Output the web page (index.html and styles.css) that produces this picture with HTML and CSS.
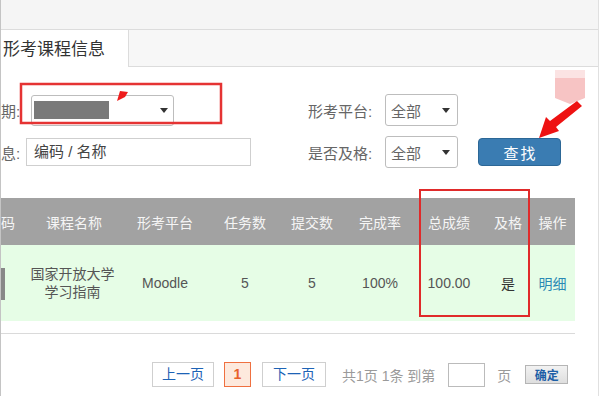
FILE: index.html
```html
<!DOCTYPE html>
<html lang="zh-CN">
<head>
    <meta charset="UTF-8">
    <title>形考课程信息</title>
    <link rel="stylesheet" href="styles.css">
</head>
<body>
    <div class="frame">
        <div class="topbar"></div>
        <div class="tabs">
            <div class="tab"><span class="tab-text">形考课程信息</span></div>
            <div class="tab-rest"></div>
        </div>

        <form class="search">
            <div class="row">
                <div class="left">
                    <span class="short-label">期:</span>
                    <div class="select select-term">
                        <span class="masked"></span>
                        <span class="caret"></span>
                    </div>
                </div>
                <span class="label">形考平台:</span>
                <div class="select select-small"><span>全部</span><span class="caret"></span></div>
            </div>
            <div class="row">
                <div class="left">
                    <span class="short-label">息:</span>
                    <div class="text-input">编码 / 名称</div>
                </div>
                <span class="label">是否及格:</span>
                <div class="select select-small"><span>全部</span><span class="caret"></span></div>
                <button type="button" class="find-btn">查找</button>
            </div>
        </form>

        <div class="grid">
            <div class="grid-head">
                <div class="cell first">码</div>
                <div class="cell">课程名称</div>
                <div class="cell">形考平台</div>
                <div class="cell">任务数</div>
                <div class="cell">提交数</div>
                <div class="cell">完成率</div>
                <div class="cell">总成绩</div>
                <div class="cell">及格</div>
                <div class="cell last">操作</div>
            </div>
            <div class="grid-row">
                <div class="cell first"><span class="stub"></span></div>
                <div class="cell name">国家开放大学<br>学习指南</div>
                <div class="cell">Moodle</div>
                <div class="cell">5</div>
                <div class="cell">5</div>
                <div class="cell">100%</div>
                <div class="cell">100.00</div>
                <div class="cell dark">是</div>
                <div class="cell last"><a class="link">明细</a></div>
            </div>
        </div>

        <div class="pager">
            <a class="page-btn prev">上一页</a>
            <a class="page-btn current">1</a>
            <a class="page-btn next">下一页</a>
            <span class="pager-info">共1页 1条 到第</span>
            <span class="page-input"></span>
            <span class="pager-info unit">页</span>
            <button type="button" class="go-btn">确定</button>
        </div>

        <!-- annotation marks drawn on top of the screenshot -->
        <svg class="marks" width="601" height="396" viewBox="0 0 601 396">
            <rect x="21" y="84" width="200" height="39" fill="none" stroke="#e53333" stroke-width="2.5"/>
            <polygon points="120,91 128,92 125,97 117,101" fill="#ee1c1c"/>
            <rect x="555" y="70" width="30" height="22" fill="#fbe3e3"/>
            <polygon points="555,78 585,78 585,98 570,104 555,98" fill="#f7c4c4"/>
            <polygon points="577,101 582,106 556,127 559,131 539,138 546,117 550,121" fill="#ee1212"/>
            <rect x="420" y="190" width="109" height="126" fill="none" stroke="#e02a2a" stroke-width="2"/>
        </svg>
    </div>
</body>
</html>
```

FILE: styles.css
```css
body {
    margin: 0;
    background: #fff;
    font-family: 'Liberation Sans', 'Noto Sans CJK SC', sans-serif;
    color: #555;
}

.frame {
    position: relative;
    width: 597px;
    height: 396px;
    border-left: 1px solid #c4c4c4;
    border-right: 1px solid #e0e0e0;
    overflow: hidden;
}

.topbar {
    height: 29px;
    background: #f5f5f5;
    border-bottom: 1px solid #dcdcdc;
}

.tabs {
    display: flex;
    height: 37px;
}

.tab {
    width: 128px;
    box-sizing: border-box;
    background: #fff;
    border-right: 1px solid #dcdcdc;
    display: flex;
    align-items: center;
    padding-left: 2px;
}

.tab-text {
    font-size: 17px;
    color: #333;
    white-space: nowrap;
    margin-bottom: 3px;
}

.tab-rest {
    flex: 1;
    background: #f7f7f7;
    border-bottom: 1px solid #dcdcdc;
}

.search {
    padding-top: 27px;
    display: flex;
    flex-direction: column;
    gap: 10px;
}

.row {
    display: flex;
    align-items: center;
    height: 32px;
}

.left {
    width: 307px;
    display: flex;
    align-items: center;
}

.short-label {
    width: 18px;
    white-space: nowrap;
    font-size: 15px;
    color: #666;
}

.select {
    position: relative;
    box-sizing: border-box;
    border: 1px solid #bdbdbd;
    border-radius: 3px;
    background: #fff;
    display: flex;
    align-items: center;
    font-size: 15px;
    color: #666;
}

.select-term {
    width: 143px;
    height: 31px;
    margin-left: 12px;
    padding-left: 2px;
}

.masked {
    width: 75px;
    height: 18px;
    background: #7a7a7a;
}

.caret {
    position: absolute;
    right: 5px;
    top: 50%;
    margin-top: -2px;
    border-left: 4px solid transparent;
    border-right: 4px solid transparent;
    border-top: 5px solid #333;
}

.select-small {
    width: 73px;
    height: 32px;
    padding-left: 5px;
}

.select-small .caret {
    right: 7px;
}

.text-input {
    box-sizing: border-box;
    width: 225px;
    height: 28px;
    margin-left: 7px;
    border: 1px solid #cfcfcf;
    padding-left: 7px;
    font-size: 15px;
    line-height: 26px;
    color: #444;
}

.label {
    width: 77px;
    font-size: 15px;
    color: #666;
}

.find-btn {
    margin-left: 20px;
    width: 83px;
    height: 28px;
    background: #3a7cb2;
    border: 1px solid #2c6796;
    border-radius: 4px;
    color: #fff;
    font-family: 'Noto Sans CJK SC', sans-serif;
    font-size: 15px;
    letter-spacing: 2px;
    padding: 0 0 0 2px;
}

.grid {
    margin-top: 30px;
    width: 575px;
    border-bottom: 1px solid #dadada;
    padding-bottom: 12px;
    margin-left: -1px;
}

.grid-head,
.grid-row {
    display: grid;
    grid-template-columns: 25px 98px 84px 76px 58px 78px 60px 58px 38px;
    align-items: center;
}

.grid-head {
    height: 47px;
    background: #a2a2a2;
    color: #f5f5f5;
    font-size: 14px;
}

.grid-row {
    height: 76px;
    background: #e6fde6;
    font-size: 14px;
    color: #555;
}

.cell {
    text-align: center;
    white-space: nowrap;
}

.grid-head .cell.first {
    text-align: left;
    padding-left: 1px;
}

.grid-row .cell.first {
    display: flex;
}

.stub {
    width: 5px;
    height: 32px;
    background: #888;
    margin-top: 2px;
}

.cell.last {
    padding-right: 7px;
}

.cell.name {
    line-height: 18px;
    padding-right: 3px;
}

.cell.dark {
    color: #333;
}

.link {
    color: #2a89b4;
}

.pager {
    display: flex;
    align-items: center;
    margin-top: 28px;
    margin-left: 151px;
    font-size: 14px;
}

.page-btn {
    box-sizing: border-box;
    height: 25px;
    line-height: 23px;
    border: 1px solid #cfcfcf;
    text-align: center;
    color: #1d63b6;
    background: #fff;
}

.prev {
    width: 62px;
}

.current {
    width: 27px;
    margin-left: 10px;
    border-color: #ef7040;
    background: #fde9dd;
    color: #e8602a;
    font-weight: bold;
}

.next {
    width: 64px;
    margin-left: 11px;
}

.pager-info {
    margin-left: 16px;
    color: #9a9a9a;
}

.page-input {
    box-sizing: border-box;
    width: 37px;
    height: 24px;
    margin-left: 13px;
    border: 1px solid #bbb;
}

.unit {
    margin-left: 12px;
}

.go-btn {
    margin-left: 14px;
    width: 43px;
    height: 19px;
    padding: 0;
    background: linear-gradient(#f2f2f2, #dedede);
    border: 1px solid #b5b5b5;
    color: #1d5ea6;
    font-family: 'Noto Sans CJK SC', sans-serif;
    font-size: 12px;
    font-weight: bold;
    line-height: 16px;
}

.marks {
    position: absolute;
    left: -1px;
    top: 0;
    pointer-events: none;
}
```
